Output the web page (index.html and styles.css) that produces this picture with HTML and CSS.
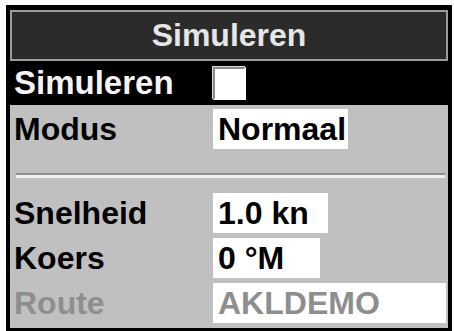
FILE: index.html
```html
<!DOCTYPE html>
<html>
<head>
<meta charset="utf-8">
<link rel="stylesheet" href="styles.css">
</head>
<body>
<div class="frame">
  <div class="title">Simuleren</div>
  <div class="row row-active">
    <div class="label">Simuleren</div>
    <div class="check"></div>
  </div>
  <div class="row row-first">
    <div class="label">Modus</div>
    <div class="value w-modus">Normaal</div>
  </div>
  <div class="sep"></div>
  <div class="row">
    <div class="label">Snelheid</div>
    <div class="value w-speed">1.0 kn</div>
  </div>
  <div class="row">
    <div class="label">Koers</div>
    <div class="value w-course">0 °M</div>
  </div>
  <div class="row disabled">
    <div class="label">Route</div>
    <div class="value w-route">AKLDEMO</div>
  </div>
</div>
</body>
</html>
```

FILE: styles.css
```css
html, body {
  margin: 0;
  padding: 0;
  background: #fdfdfd;
  width: 454px;
  height: 331px;
  overflow: hidden;
}
body {
  font-family: "Liberation Sans", Arial, sans-serif;
  font-weight: bold;
  font-size: 32px;
}
.frame {
  margin: 5px 2px 0 6px;
  border: 4px solid #000;
  border-top-width: 5px;
  border-bottom-width: 3px;
  background: #c0c0c0;
  box-sizing: border-box;
  height: 326px;
}
.title {
  height: 47px;
  border: 2px solid #9c9c9c;
  background: #2b2b2b;
  color: #e6e6e6;
  text-align: center;
  line-height: 47px;
}
.row {
  display: flex;
  align-items: center;
  height: 40px;
  margin-top: 5px;
}
.row-active {
  background: #000;
  color: #f4f4f4;
  height: 44px;
  margin-top: 0;
}
.row-first {
  margin-top: 4px;
}
.label {
  width: 199px;
  padding-left: 4px;
  line-height: 40px;
}
.row-active .label {
  font-size: 33px;
}
.check {
  width: 29px;
  height: 29px;
  background: #fff;
  border: 2px solid;
  border-color: #8a8a8a #fff #fff #8a8a8a;
  box-shadow: -1px -1px 0 #d8d8d8;
}
.value {
  background: #fff;
  height: 40px;
  line-height: 40px;
  padding-left: 5px;
  box-sizing: border-box;
  color: #000;
}
.w-modus { width: 135px; }
.w-speed { width: 115px; }
.w-course { width: 107px; }
.w-route { width: 233px; }
.disabled .label,
.disabled .value {
  color: #8e8e8e;
}
.sep {
  margin: 24px 3px 15px 6px;
  height: 2px;
  background: #909090;
  border-bottom: 3px solid #f2f2f2;
}
```
